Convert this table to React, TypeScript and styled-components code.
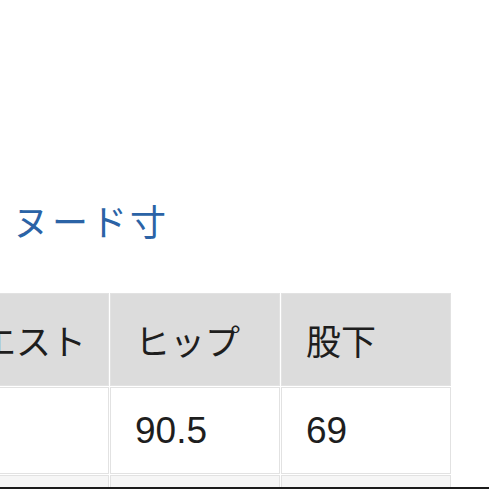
import React from "react";
import styled, { createGlobalStyle } from "styled-components";

const Global = createGlobalStyle`
  html, body { margin: 0; padding: 0; background: #ffffff; }
  body { font-family: "Liberation Sans", "Noto Sans CJK JP", sans-serif; }
`;

const Page = styled.div`
  box-sizing: border-box;
  width: 489px;
  height: 489px;
  overflow: hidden;
  border-bottom: 2px solid #1c1c1c;
  background: #ffffff;
`;

const Title = styled.h2`
  margin: 0;
  padding: 198px 0 0 13px;
  font-family: "Noto Sans CJK JP", sans-serif;
  font-weight: 400;
  font-size: 36px;
  line-height: 44px;
  letter-spacing: 3px;
  color: #2b63a6;
`;

const Table = styled.table`
  margin: 50px 0 0 -80px;
  border-collapse: separate;
  border-spacing: 1px;
  table-layout: fixed;
  width: 532px;
  background: #ffffff;
`;

const Cell = styled.td<{ $head?: boolean; $faint?: boolean }>`
  box-sizing: border-box;
  border: 1px solid #e2e2e2;
  background: ${(p) => (p.$head ? "#dcdcdc" : p.$faint ? "#f6f6f6" : "#ffffff")};
  padding: 0 0 0 24px;
  height: ${(p) => (p.$head ? "93px" : p.$faint ? "40px" : "87px")};
  font-size: ${(p) => (p.$head ? "35px" : "37px")};
  font-weight: 400;
  color: #1e1e1e;
  text-align: left;
  vertical-align: middle;
  white-space: nowrap;
  overflow: hidden;
`;

const heads = ["ウエスト", "ヒップ", "股下"];
const values = ["", "90.5", "69"];

export default function App() {
  return (
    <Page>
      <Global />
      <Title>ヌード寸</Title>
      <Table>
        <colgroup>
          <col style={{ width: 188 }} />
          <col style={{ width: 170 }} />
          <col style={{ width: 170 }} />
        </colgroup>
        <tbody>
          <tr>
            {heads.map((h) => (
              <Cell as="th" $head key={h}>
                {h}
              </Cell>
            ))}
          </tr>
          <tr>
            {values.map((v, i) => (
              <Cell key={i}>{v}</Cell>
            ))}
          </tr>
          <tr>
            {values.map((_, i) => (
              <Cell $faint key={i} />
            ))}
          </tr>
        </tbody>
      </Table>
    </Page>
  );
}
